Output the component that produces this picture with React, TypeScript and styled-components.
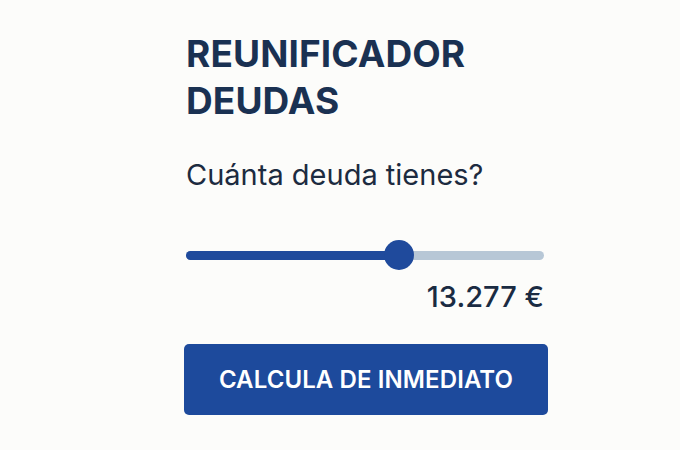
import React from "react";
import styled, { createGlobalStyle } from "styled-components";

const Global = createGlobalStyle`
  html, body { margin: 0; padding: 0; background: #fcfcfa; }
  body { font-family: Inter, "Noto Sans", sans-serif; }
`;

const Page = styled.div`
  width: 680px;
  height: 450px;
  box-sizing: border-box;
  padding-left: 184px;
  display: flex;
  background: #fcfcfa;
`;

const Card = styled.div`
  width: 364px;
  padding-top: 30px;
  display: flex;
  flex-direction: column;
`;

const Title = styled.h1`
  margin: 0 0 0 2px;
  font-size: 37px;
  line-height: 47px;
  font-weight: 700;
  color: #1a3152;
  letter-spacing: 0.1px;
`;

const Question = styled.p`
  margin: 34px 0 0 2px;
  font-size: 29px;
  line-height: 34px;
  font-weight: 400;
  color: #1c2b40;
`;

const SliderWrap = styled.div`
  position: relative;
  margin: 48px 4px 0 2px;
  height: 30px;
  display: flex;
  align-items: center;
`;

const Track = styled.div`
  width: 100%;
  height: 9px;
  border-radius: 5px;
  background: #b7c7d6;
  overflow: hidden;
`;

const Fill = styled.div`
  height: 100%;
  background: #1f4a9c;
`;

const Thumb = styled.div`
  position: absolute;
  top: 0;
  width: 30px;
  height: 30px;
  margin-left: -15px;
  border-radius: 50%;
  background: #1f4a9c;
`;

const Amount = styled.div`
  margin: 10px 4px 0 0;
  text-align: right;
  font-size: 29px;
  line-height: 34px;
  color: #1a2b42;
  font-weight: 500;
`;

const Button = styled.button`
  margin-top: 30px;
  height: 71px;
  width: 100%;
  border: none;
  border-radius: 5px;
  background: #1d4a9c;
  color: #ffffff;
  font-family: Inter, "Noto Sans", sans-serif;
  font-size: 24px;
  font-weight: 600;
  letter-spacing: 0.1px;
  cursor: pointer;
`;

export default function App() {
  const pct = 59.5;
  return (
    <>
      <Global />
      <Page>
        <Card>
          <Title>
            REUNIFICADOR
            <br />
            DEUDAS
          </Title>
          <Question>Cuánta deuda tienes?</Question>
          <SliderWrap>
            <Track>
              <Fill style={{ width: `${pct}%` }} />
            </Track>
            <Thumb style={{ left: `${pct}%` }} />
          </SliderWrap>
          <Amount>13.277 €</Amount>
          <Button>CALCULA DE INMEDIATO</Button>
        </Card>
      </Page>
    </>
  );
}
